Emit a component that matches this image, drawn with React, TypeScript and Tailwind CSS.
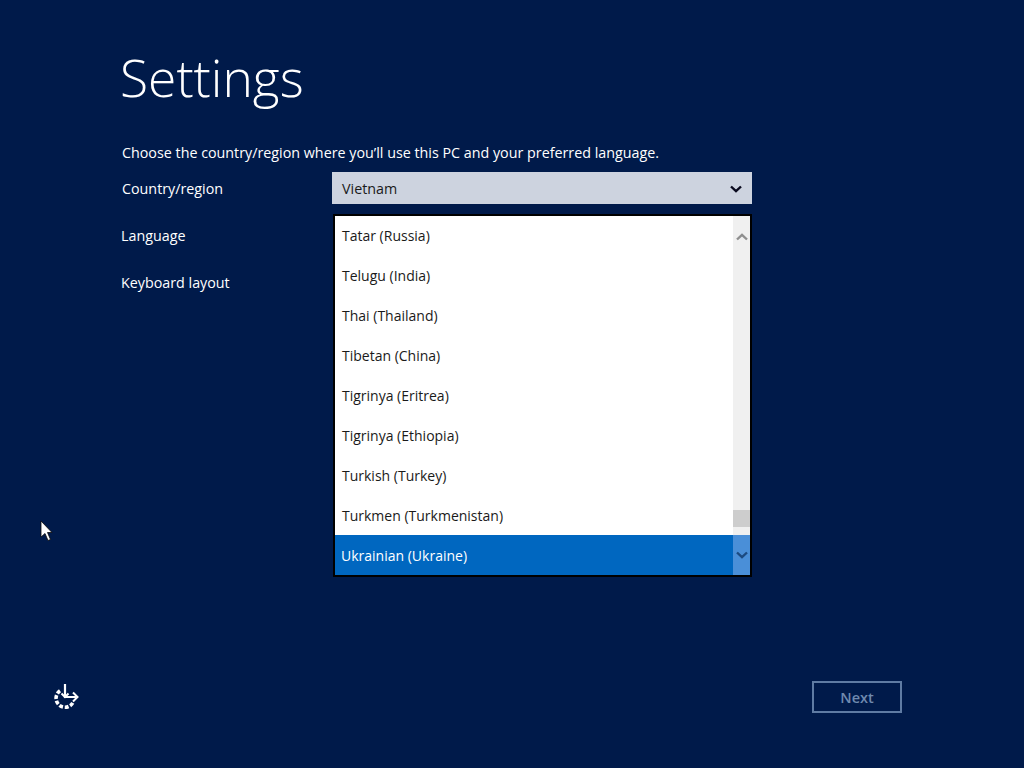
const languages = [
  "Tatar (Russia)",
  "Telugu (India)",
  "Thai (Thailand)",
  "Tibetan (China)",
  "Tigrinya (Eritrea)",
  "Tigrinya (Ethiopia)",
  "Turkish (Turkey)",
  "Turkmen (Turkmenistan)",
];

const Chevron = ({ up = false, className = "" }: { up?: boolean; className?: string }) => (
  <svg width="12" height="8" viewBox="0 0 12 8" className={className}>
    <path
      d={up ? "M1 6.5 L6 1.8 L11 6.5" : "M1 1.5 L6 6.2 L11 1.5"}
      fill="none"
      stroke="currentColor"
      strokeWidth="2.4"
    />
  </svg>
);

const LanguageList = () => (
  <div className="absolute left-[333px] top-[214px] flex h-[363px] w-[419px] border-2 border-black bg-white text-[14px] text-[#1a1a1a]">
    <ul className="w-[398px]">
      {languages.map((name) => (
        <li key={name} className="flex h-10 items-center pb-[2px] pl-[7px]">
          {name}
        </li>
      ))}
    </ul>
    <div className="flex w-[17px] flex-col items-center bg-[#f0f0f0] pt-[17px] text-[#8f8f8f]">
      <Chevron up />
      <div className="mt-[269px] h-[17px] w-full bg-[#cdcdcd]"></div>
    </div>
    <div className="absolute bottom-0 left-0 flex h-10 w-full items-center bg-[#0067c0] pl-[6px] text-white">
      Ukrainian (Ukraine)
      <div className="absolute right-0 top-0 flex h-full w-[17px] items-center justify-center bg-[#4a8fd8] text-[#1c4a80]">
        <Chevron />
      </div>
    </div>
  </div>
);

const SetupIcon = () => (
  <svg width="26" height="26" viewBox="0 0 26 26" fill="none" stroke="white">
    <path d="M12 0 V13 H23" strokeWidth="2.2" />
    <path d="M8.5 9.5 L12 13 L15.5 9.5" strokeWidth="2" />
    <path d="M20 8.5 L24.5 13 L20 17.5" strokeWidth="2" />
    <path
      d="M7 6.8 A9 9 0 1 0 20 18.5"
      strokeWidth="3.6"
      strokeDasharray="3.8 1.8"
    />
  </svg>
);

const Cursor = () => (
  <svg width="13" height="22" viewBox="0 0 13 22" className="absolute left-[40px] top-[520px]">
    <path d="M1 1 V17 L5 13.5 L8 20.5 L10.5 19.5 L7.5 12.5 H12 Z" fill="white" stroke="#0a0a0a" strokeWidth="0.8" />
  </svg>
);

export default function App() {
  return (
    <div className="relative flex h-[768px] w-[1024px] flex-col overflow-hidden bg-[#001a4a] font-['Open_Sans','Noto_Sans',sans-serif] text-[14.3px] text-white">
      <div className="pl-[120px] pt-[39px]">
        <h1 className="text-[51.5px] leading-[76px] font-light">Settings</h1>
        <p className="mt-[28px] pl-[2px] leading-5">
          Choose the country/region where you’ll use this PC and your preferred language.
        </p>
        <div className="mt-[9px] flex flex-col gap-[15px]">
          <div className="flex h-8 items-center">
            <span className="w-[212px] pl-[2px] pt-[2px]">Country/region</span>
            <div className="flex h-8 w-[420px] items-center justify-between bg-[#cdd3df] pl-[10px] pr-[10px] pt-[2px] text-[#1a1a1a]">
              Vietnam
              <Chevron className="text-[#0a0a1e]" />
            </div>
          </div>
          <div className="flex h-8 items-center pl-px pt-[2px]">Language</div>
          <div className="flex h-8 items-center pl-px pt-[2px]">Keyboard layout</div>
        </div>
      </div>
      <div className="mt-auto flex items-center justify-between pb-[55px] pl-[53px] pr-[122px]">
        <SetupIcon />
        <button
          type="button"
          className="h-8 w-[90px] border-2 border-[#5f7ba3] pt-[2px] text-[14.5px] font-semibold text-[#6f89ae]"
        >
          Next
        </button>
      </div>
      <LanguageList />
      <Cursor />
    </div>
  );
}
